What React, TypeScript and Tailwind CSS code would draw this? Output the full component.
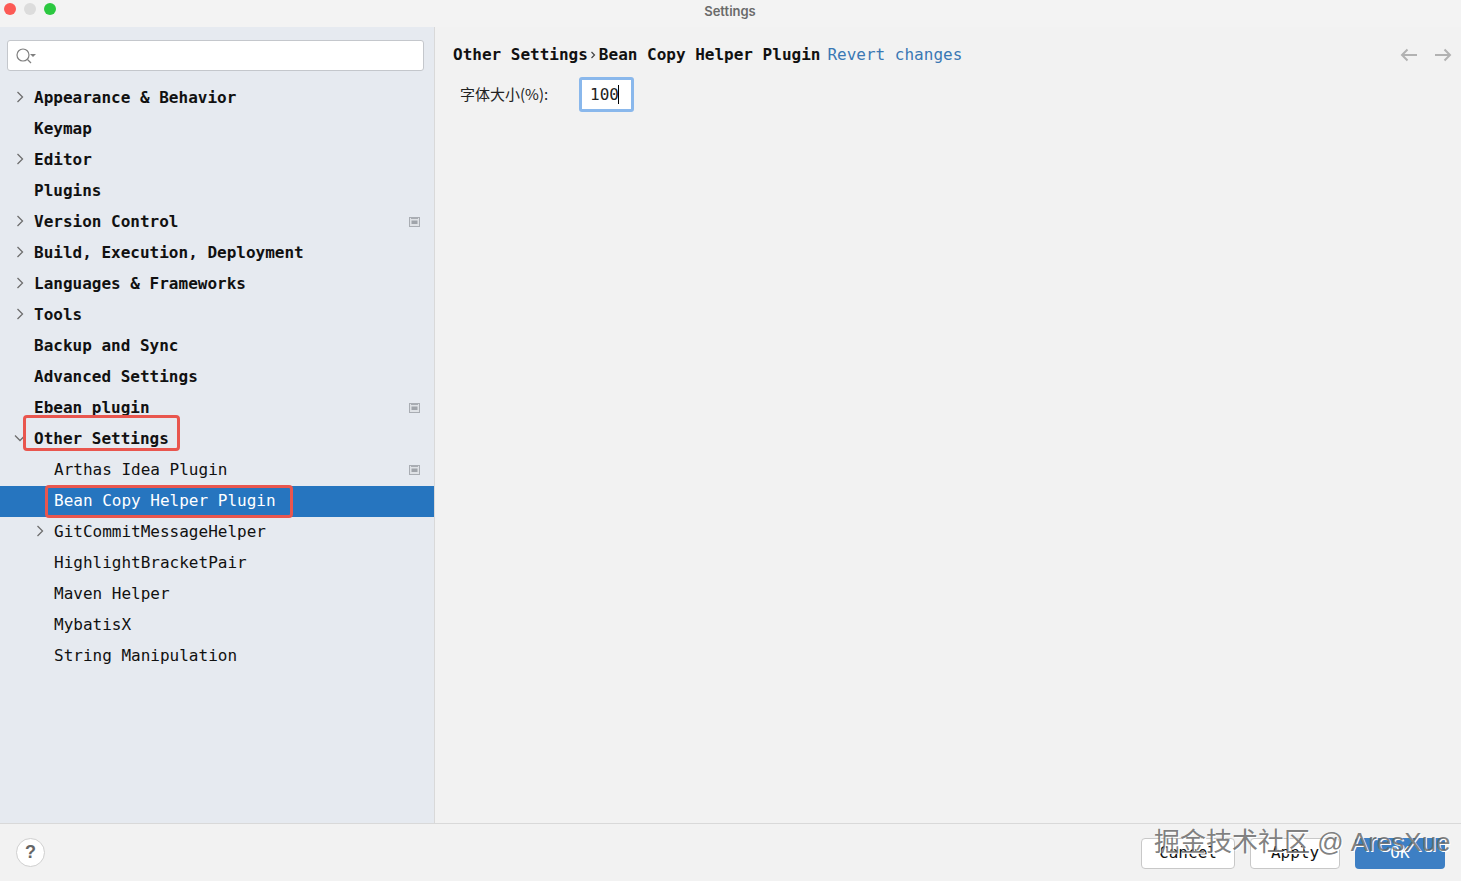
import React from "react";

const mono = "font-['DejaVu_Sans_Mono','Noto_Sans_CJK_SC',monospace]";

type Row = { label: string; bold?: boolean; indent?: boolean; arrow?: "right" | "down"; badge?: boolean; selected?: boolean };

const rows: Row[] = [
  { label: "Appearance & Behavior", bold: true, arrow: "right" },
  { label: "Keymap", bold: true },
  { label: "Editor", bold: true, arrow: "right" },
  { label: "Plugins", bold: true },
  { label: "Version Control", bold: true, arrow: "right", badge: true },
  { label: "Build, Execution, Deployment", bold: true, arrow: "right" },
  { label: "Languages & Frameworks", bold: true, arrow: "right" },
  { label: "Tools", bold: true, arrow: "right" },
  { label: "Backup and Sync", bold: true },
  { label: "Advanced Settings", bold: true },
  { label: "Ebean plugin", bold: true, badge: true },
  { label: "Other Settings", bold: true, arrow: "down" },
  { label: "Arthas Idea Plugin", indent: true, badge: true },
  { label: "Bean Copy Helper Plugin", indent: true, selected: true },
  { label: "GitCommitMessageHelper", indent: true, arrow: "right" },
  { label: "HighlightBracketPair", indent: true },
  { label: "Maven Helper", indent: true },
  { label: "MybatisX", indent: true },
  { label: "String Manipulation", indent: true },
];

function Arrow({ dir }: { dir: "right" | "down" }) {
  return (
    <svg width="12" height="12" viewBox="0 0 12 12" fill="none" stroke="#6e6e6e" strokeWidth="1.3" className="shrink-0">
      {dir === "right" ? <path d="M3.5 1 L8.5 6 L3.5 11" /> : <path d="M1 3.5 L6 8.5 L11 3.5" />}
    </svg>
  );
}

function Badge() {
  return (
    <svg width="11" height="10" viewBox="0 0 11 10" className="shrink-0 ml-auto mr-[14px] -mt-[2px]">
      <rect x="0.5" y="0.5" width="10" height="9" fill="#dfe2e6" stroke="#a9adb3" />
      <rect x="2" y="1" width="7" height="1" fill="#a9adb3" />
      <rect x="2.5" y="3.5" width="6" height="3.5" fill="#a0a4aa" />
    </svg>
  );
}

function TreeRow({ r }: { r: Row }) {
  const base = r.selected ? "bg-[#2675bf] text-white" : "text-[#111111]";
  return (
    <div className={`relative flex items-center h-[31px] ${r.indent ? "pl-[54px]" : "pl-[34px]"} ${base}`}>
      {r.arrow && (
        <span className={`absolute top-[8px] flex ${r.indent ? "left-[34px]" : "left-[14px]"}`}>
          <Arrow dir={r.arrow} />
        </span>
      )}
      <span className={`text-[16px] whitespace-pre leading-none -mt-[1px] ${r.bold ? "font-bold" : ""}`}>{r.label}</span>
      {r.badge && <Badge />}
      {r.label === "Other Settings" && (
        <span className="absolute left-[23px] top-[-9px] w-[157px] h-[36px] border-[3px] border-[#e9564e] rounded-[4px]" />
      )}
      {r.selected && (
        <span className="absolute left-[45px] top-[-1px] w-[248px] h-[33px] border-[3px] border-[#e9564e] rounded-[4px]" />
      )}
    </div>
  );
}

function Btn({ label, primary, w }: { label: string; primary?: boolean; w: string }) {
  return (
    <button
      className={`h-[31px] ${w} rounded-[4px] text-[16px] flex items-center justify-center ${
        primary ? "bg-[#3d7fc4] text-white" : "bg-white border border-[#c8c8c8] text-[#111111]"
      }`}
    >
      {label}
    </button>
  );
}

export default function App() {
  return (
    <div className={`relative w-[1461px] h-[881px] overflow-hidden bg-[#f2f2f2] flex flex-col ${mono}`}>
      <div className="relative h-[27px] shrink-0 flex items-center justify-center bg-[#f3f3f3]">
        <div className="absolute left-[4px] top-[3px] flex gap-[8px]">
          <span className="w-[12px] h-[12px] rounded-full bg-[#fc5a55]" />
          <span className="w-[12px] h-[12px] rounded-full bg-[#dcdcdc]" />
          <span className="w-[12px] h-[12px] rounded-full bg-[#2bc840]" />
        </div>
        <span className="font-['Inter',sans-serif] text-[13px] font-semibold text-[#6a6a6a] -mt-[4px] -translate-x-[0.5px]">Settings</span>
      </div>

      <div className="flex flex-1 min-h-0">
        <aside className="w-[435px] shrink-0 bg-[#e6eaf0] border-r border-[#d9d9d9] flex flex-col">
          <div className="pt-[13px] px-[7px] pr-[10px]">
            <div className="h-[31px] bg-white rounded-[3px] border border-[#c4c7cc] flex items-center pl-[7px]">
              <svg width="22" height="18" viewBox="0 0 22 18" fill="none" stroke="#7f7f7f" strokeWidth="1.2">
                <circle cx="8" cy="8" r="6" />
                <path d="M12.5 12.5 L16 16" />
                <path d="M15 7 H21 L18 10 Z" fill="#7f7f7f" stroke="none" />
              </svg>
            </div>
          </div>
          <div className="mt-[12px]">
            {rows.map((r) => (
              <TreeRow key={r.label} r={r} />
            ))}
          </div>
        </aside>

        <main className="flex-1 bg-[#f2f2f2] px-[18px]">
          <div className="flex items-center h-[22px] mt-[17px] text-[16px] leading-none relative">
            <span className="font-bold text-[#111111] whitespace-pre">Other Settings</span>
            <svg width="6" height="8" viewBox="0 0 6 8" fill="none" stroke="#444444" strokeWidth="1.2" className="mx-[2.5px]">
              <path d="M1.5 1 L4.5 4 L1.5 7" />
            </svg>
            <span className="font-bold text-[#111111] whitespace-pre">Bean Copy Helper Plugin</span>
            <span className="text-[#3a78b4] whitespace-pre ml-[7px]">Revert changes</span>
            <svg width="18" height="14" viewBox="0 0 18 14" fill="none" stroke="#b2b2b2" strokeWidth="2" className="absolute left-[947px] top-[4px]">
              <path d="M17 7 H2 M7.5 1.5 L2 7 L7.5 12.5" />
            </svg>
            <svg width="18" height="14" viewBox="0 0 18 14" fill="none" stroke="#b2b2b2" strokeWidth="2" className="absolute left-[981px] top-[4px]">
              <path d="M1 7 H16 M10.5 1.5 L16 7 L10.5 12.5" />
            </svg>
          </div>
          <div className="flex items-center mt-[11px] pl-[7px]">
            <span className="text-[15px] text-[#222222] w-[119px] whitespace-pre font-['Noto_Sans_CJK_SC','DejaVu_Sans_Mono',sans-serif]">字体大小(%):</span>
            <div className="w-[55px] h-[35px] bg-white border-[3px] border-[#8ab8ec] rounded-[3px] flex items-center pl-[8px] text-[16px] text-[#222222]">
              100<span className="w-px h-[19px] bg-black -ml-[1px]" />
            </div>
          </div>
        </main>
      </div>

      <footer className="h-[58px] shrink-0 bg-[#f2f2f2] border-t border-[#d9d9d9] flex items-center pl-[16px] pr-[16px]">
        <div className="w-[29px] h-[29px] rounded-full bg-white border border-[#cfcfcf] flex items-center justify-center font-bold text-[#666666] text-[18px] font-['Liberation_Sans',sans-serif]">?</div>
        <div className="ml-auto flex gap-[15px] mt-[1px]">
          <Btn label="Cancel" w="w-[94px]" />
          <Btn label="Apply" w="w-[90px]" />
          <Btn label="OK" w="w-[90px]" primary />
        </div>
      </footer>

      <span className="absolute left-[1154px] top-[824px] text-[26px] leading-[36px] whitespace-pre text-[#5f5f5f]/80 font-['Liberation_Sans','Noto_Sans_CJK_SC',sans-serif] [text-shadow:1px_1px_0_#ffffff]">掘金技术社区 @ AresXue</span>
    </div>
  );
}
